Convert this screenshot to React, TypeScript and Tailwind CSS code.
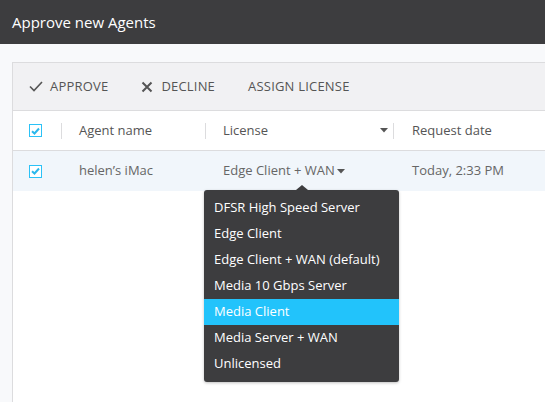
import React from "react";

const font = { fontFamily: '"Open Sans", "Noto Sans", sans-serif' };

function Check() {
  return (
    <span className="flex h-[13px] w-[13px] items-center justify-center border-[1.5px] border-[#2bc2f7] bg-white">
      <svg width="9" height="8" viewBox="0 0 9 8">
        <path d="M1 4.2 L3.5 6.5 L8 1.5" fill="none" stroke="#2bb8ec" strokeWidth="2" />
      </svg>
    </span>
  );
}

function Caret({ className = "" }: { className?: string }) {
  return (
    <svg width="8" height="5" viewBox="0 0 8 5" className={className}>
      <path d="M0 0 L8 0 L4 4.5 Z" fill="#555" />
    </svg>
  );
}

const items = [
  "DFSR High Speed Server",
  "Edge Client",
  "Edge Client + WAN (default)",
  "Media 10 Gbps Server",
  "Media Client",
  "Media Server + WAN",
  "Unlicensed",
];

export default function App() {
  return (
    <div style={font} className="flex h-[402px] w-[545px] flex-col overflow-hidden bg-[#f8f9fb]">
      <div className="flex h-[44px] shrink-0 items-center bg-[#3d3d3f] px-3 text-[15px] text-white">
        Approve new Agents
      </div>
      <div className="flex flex-1 pl-3 pt-[18px]">
        <div className="flex flex-1 flex-col border-l border-t border-[#dcdcde] bg-white">
          <div className="flex h-[48px] items-center border-b border-[#dcdcde] bg-[#f1f1f3] pl-4 text-[13px] tracking-[0.2px] text-[#555]">
            <svg width="14" height="11" viewBox="0 0 14 11" className="mr-[7px]">
              <path d="M1 5.5 L5 9.5 L13 1" fill="none" stroke="#555" strokeWidth="1.6" />
            </svg>
            <span className="mr-[33px]">APPROVE</span>
            <svg width="12" height="12" viewBox="0 0 12 12" className="mr-[8px]">
              <path d="M1.5 1.5 L10.5 10.5 M10.5 1.5 L1.5 10.5" fill="none" stroke="#555" strokeWidth="2" />
            </svg>
            <span className="mr-[33px]">DECLINE</span>
            <span>ASSIGN LICENSE</span>
          </div>
          <div className="flex h-[40px] items-center border-b border-[#dcdcde] text-[13px] text-[#555]">
            <div className="w-[48px] pl-4">
              <Check />
            </div>
            <div className="h-[16px] w-px bg-[#dcdcde]" />
            <div className="w-[143px] pl-[17px]">Agent name</div>
            <div className="h-[16px] w-px bg-[#dcdcde]" />
            <div className="flex w-[187px] items-center justify-between pl-[17px] pr-[5px]">
              <span>License</span>
              <Caret />
            </div>
            <div className="h-[16px] w-px bg-[#dcdcde]" />
            <div className="pl-[18px]">Request date</div>
          </div>
          <div className="flex h-[40px] items-center bg-[#f1f6fb] text-[13px] text-[#666]">
            <div className="w-[49px] pl-4">
              <Check />
            </div>
            <div className="w-[144px] pl-[17px]">helen’s iMac</div>
            <div className="relative flex h-full w-[188px] items-center pl-[17px]">
              <span>Edge Client + WAN</span>
              <Caret className="ml-[2px] mt-[1px]" />
              <div className="absolute left-[-2px] top-[39px] z-10 w-[195px] rounded-[3px] bg-[#3d3d3f] py-[5px] text-[13px] text-white shadow-[0_1px_3px_rgba(0,0,0,0.25)]">
                <div className="absolute left-[92px] top-[-5px] h-0 w-0 border-x-[6px] border-b-[5px] border-x-transparent border-b-[#3d3d3f]" />
                {items.map((it) => (
                  <div
                    key={it}
                    className={
                      "flex h-[26px] items-center pl-[10px] " +
                      (it === "Media Client" ? "bg-[#22c3fb]" : "")
                    }
                  >
                    {it}
                  </div>
                ))}
              </div>
            </div>
            <div className="pl-[18px]">Today, 2:33 PM</div>
          </div>
        </div>
      </div>
    </div>
  );
}
